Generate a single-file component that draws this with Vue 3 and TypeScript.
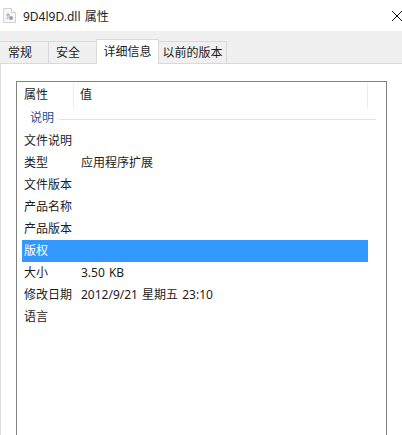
<script setup lang="ts">
interface Row {
  name: string
  value?: string
  selected?: boolean
}

const tabs = ['常规', '安全', '详细信息', '以前的版本']

const rows: Row[] = [
  { name: '文件说明' },
  { name: '类型', value: '应用程序扩展' },
  { name: '文件版本' },
  { name: '产品名称' },
  { name: '产品版本' },
  { name: '版权', selected: true },
  { name: '大小', value: '3.50 KB' },
  { name: '修改日期', value: '2012/9/21 星期五 23:10' },
  { name: '语言' },
]
</script>

<template>
  <div class="dialog">
    <div class="titlebar">
      <svg class="file-icon" width="13" height="15" viewBox="0 0 13 15">
        <path d="M.5.5h8l4 4v10H.5z" fill="#f7f7f7" stroke="#d2d2d2" />
        <path d="M8.5.5v4h4" fill="#fff" stroke="#d2d2d2" />
        <circle cx="5" cy="7" r="1.8" fill="#b4bac0" />
        <circle cx="8" cy="10" r="2" fill="#9aa2a9" />
        <path d="M3.5 11l2-2" stroke="#c2c7cc" stroke-width="1.5" />
      </svg>
      <span class="title">9D4l9D.dll 属性</span>
      <svg class="close" width="10" height="10" viewBox="0 0 10 10">
        <path d="M0 0l10 10M10 0L0 10" stroke="#111" fill="none" />
      </svg>
    </div>

    <div class="tabstrip">
      <div
        v-for="(tab, i) in tabs"
        :key="tab"
        :class="['tab', 'tab-' + i, { active: i === 2 }]"
      >
        {{ tab }}
      </div>
    </div>

    <div class="page">
      <div class="listbox">
        <div class="head">
          <div class="head-name">属性</div>
          <div class="head-value">值</div>
        </div>
        <div class="group">
          <span class="group-label">说明</span>
          <span class="group-line"></span>
        </div>
        <div
          v-for="row in rows"
          :key="row.name"
          :class="['row', { selected: row.selected }]"
        >
          <span class="row-name">{{ row.name }}</span>
          <span v-if="row.value" class="row-value">{{ row.value }}</span>
        </div>
      </div>
    </div>
  </div>
</template>

<style>
html,
body {
  margin: 0;
  background: #fff;
}
</style>

<style scoped>
.dialog {
  width: 402px;
  height: 435px;
  overflow: hidden;
  display: flex;
  flex-direction: column;
  background: #fff;
  color: #1c1c1c;
  font-family: "Noto Sans", "Noto Sans CJK SC", sans-serif;
  font-size: 12px;
}

.titlebar {
  height: 31px;
  flex: none;
  display: flex;
  align-items: center;
  padding-left: 3px;
  box-sizing: border-box;
}

.file-icon {
  flex: none;
}

.title {
  margin-left: 7px;
  font-size: 12px;
  word-spacing: 1px;
}

.close {
  margin-left: auto;
  flex: none;
}

.tabstrip {
  height: 33px;
  flex: none;
  box-sizing: border-box;
  background: #f0f0f0;
  border-bottom: 1px solid #d9d9d9;
  display: flex;
  align-items: flex-end;
}

.tab {
  height: 23px;
  box-sizing: border-box;
  margin-bottom: -1px;
  border: 1px solid #d9d9d9;
  border-left: none;
  background: #f0f0f0;
  line-height: 22px;
}

.tab-0 {
  width: 49px;
  padding-left: 8px;
}

.tab-1 {
  width: 48px;
  padding-left: 7px;
}

.tab-2 {
  width: 63px;
  height: 25px;
  background: #fff;
  border-left: 1px solid #d9d9d9;
  border-bottom: none;
  line-height: 23px;
  margin-left: -1px;
  text-align: center;
}

.tab-3 {
  width: 68px;
  text-align: center;
}

.page {
  flex: 1;
  border-left: 1px solid #dcdcdc;
  padding: 17px 15px 0;
}

.listbox {
  width: 371px;
  height: 400px;
  box-sizing: border-box;
  border: 1px solid #828282;
  border-width: 1px 1px 0;
}

.head {
  height: 27px;
  display: flex;
  align-items: center;
}

.head-name {
  width: 57px;
  height: 25px;
  box-sizing: border-box;
  padding-left: 7px;
  line-height: 24px;
  border-right: 1px solid #ececec;
}

.head-value {
  width: 294px;
  height: 25px;
  box-sizing: border-box;
  padding-left: 6px;
  line-height: 24px;
  border-right: 1px solid #ececec;
}

.group {
  height: 21px;
  display: flex;
  align-items: center;
  padding-left: 13px;
  color: #1f4e96;
}

.group-label {
  line-height: 16px;
  padding-bottom: 4px;
}

.group-line {
  flex: 1;
  height: 1px;
  margin: 0 10px 0 5px;
  background: #e2e3ea;
}

.row {
  height: 22px;
  width: 346px;
  margin-left: 5px;
  display: flex;
  align-items: center;
  box-sizing: border-box;
  padding: 0 0 2px 2px;
}

.row-name {
  width: 57px;
  flex: none;
}

.row-value {
  word-spacing: 1px;
}

.row.selected {
  background: #3399ff;
  color: #fff;
}
</style>
